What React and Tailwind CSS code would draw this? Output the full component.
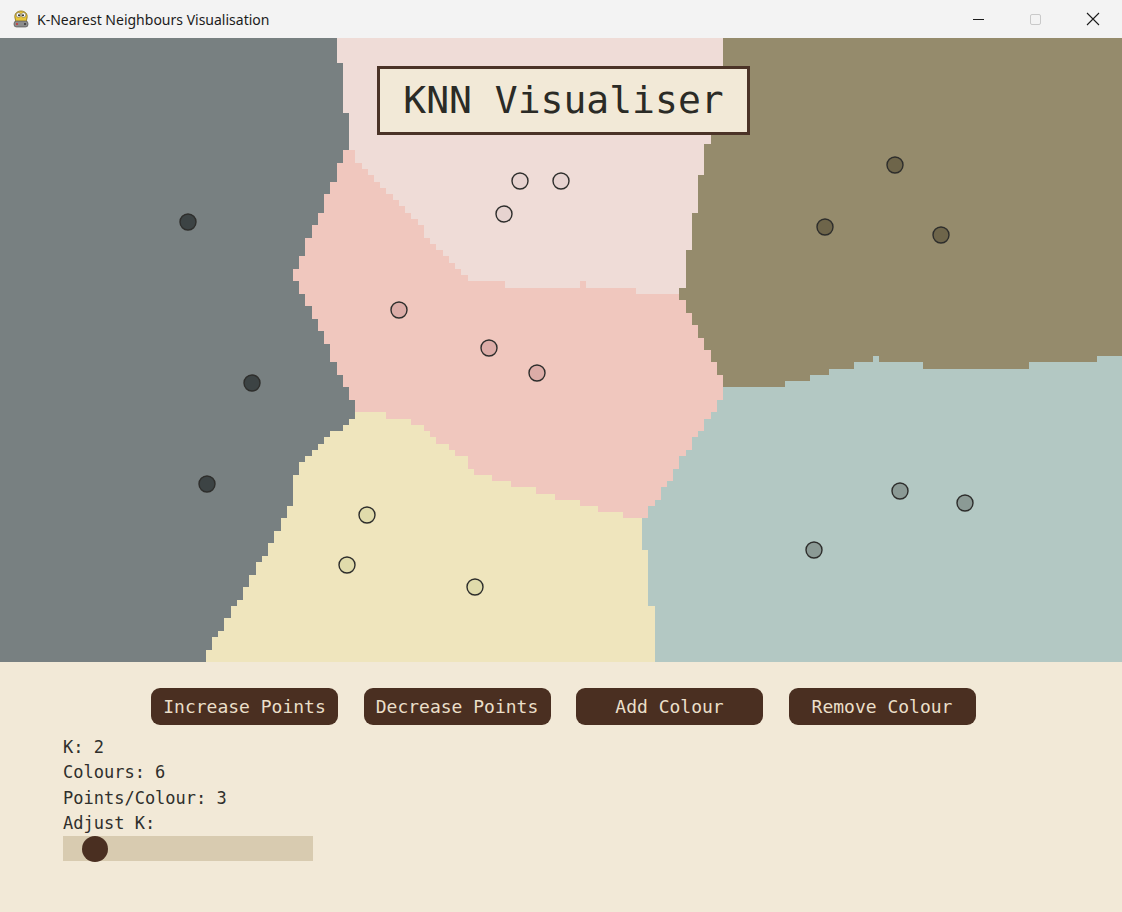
import React from "react";

const W = 1122;
const H = 624;
const COLS = 180;
const ROWS = 100;
const CW = W / COLS;
const CH = H / ROWS;

const CLASSES = [
  { fill: "#788081", pt: "#3c4344", pts: [[188, 184], [252, 345], [207, 446]] },
  { fill: "#efdcd7", pt: "#e7d3d0", pts: [[520, 143], [561, 143], [504, 176]] },
  { fill: "#f0c7be", pt: "#dcaca7", pts: [[399, 272], [489, 310], [537, 335]] },
  { fill: "#958b6c", pt: "#6e654a", pts: [[895, 127], [825, 189], [941, 197]] },
  { fill: "#efe5bd", pt: "#e0dbab", pts: [[367, 477], [347, 527], [475, 549]] },
  { fill: "#b3c8c3", pt: "#8b9a95", pts: [[900, 453], [965, 465], [814, 512]] },
];

function classify(x, y) {
  let best = 0;
  let bd = Infinity;
  CLASSES.forEach((c, ci) => {
    c.pts.forEach(([px, py]) => {
      const d = (px - x) * (px - x) + (py - y) * (py - y);
      if (d < bd) {
        bd = d;
        best = ci;
      }
    });
  });
  return best;
}

function buildRuns() {
  const runs = [];
  for (let j = 0; j < ROWS; j++) {
    const y = j * CH;
    let start = 0;
    let cur = classify(0, y);
    for (let i = 1; i <= COLS; i++) {
      const c = i < COLS ? classify(i * CW, y) : -1;
      if (c !== cur) {
        runs.push({ x: start * CW, y: j * CH, w: (i - start) * CW, c: cur });
        start = i;
        cur = c;
      }
    }
  }
  return runs;
}

const RUNS = buildRuns();

function PygameIcon() {
  return (
    <svg width="20" height="20" viewBox="0 0 20 20">
      <path d="M4 9 C3 5 6 2 10 2 C14 2 17 5 16 9 L15 13 C13 15 7 15 5 13 Z" fill="#e8c53a" stroke="#8a6d10" strokeWidth="0.8" />
      <circle cx="7.5" cy="6" r="2.3" fill="#fff" stroke="#555" strokeWidth="0.5" />
      <circle cx="12.5" cy="6" r="2.3" fill="#fff" stroke="#555" strokeWidth="0.5" />
      <circle cx="8" cy="6.3" r="1" fill="#222" />
      <circle cx="12" cy="6.3" r="1" fill="#222" />
      <rect x="3" y="12" width="14" height="6" rx="2.5" fill="#8c8c8c" stroke="#444" strokeWidth="0.6" />
      <circle cx="6" cy="15" r="1" fill="#c33" />
      <circle cx="14" cy="15" r="1" fill="#333" />
    </svg>
  );
}

function KnnCanvas() {
  return (
    <svg width={W} height={H} viewBox={`0 0 ${W} ${H}`} className="block">
      <g shapeRendering="crispEdges">
        {RUNS.map((r, k) => (
          <rect key={k} x={r.x} y={r.y} width={r.w + 0.6} height={CH + 0.6} fill={CLASSES[r.c].fill} />
        ))}
      </g>
      {CLASSES.map((c, ci) =>
        c.pts.map(([x, y], pi) => (
          <circle key={`${ci}-${pi}`} cx={x} cy={y} r="8" fill={c.pt} stroke="#2e2e2c" strokeWidth="1.4" />
        ))
      )}
    </svg>
  );
}

const mono = { fontFamily: '"DejaVu Sans Mono", "Liberation Mono", monospace' };

function Btn({ children }) {
  return (
    <div
      className="w-[187px] h-[37px] rounded-[9px] bg-[#4a2f21] text-[#eadfc9] text-[18px] flex items-center justify-center"
      style={mono}
    >
      {children}
    </div>
  );
}

export default function App() {
  return (
    <div className="w-[1122px] h-[912px] bg-[#f2e9d7] overflow-hidden flex flex-col">
      <div className="h-[38px] bg-[#f3f3f3] flex items-center shrink-0">
        <div className="ml-[11px] mr-[6px] flex items-center">
          <PygameIcon />
        </div>
        <div className="text-[14px] text-[#1b1b1b]" style={{ fontFamily: '"Noto Sans", "Open Sans", sans-serif' }}>
          K-Nearest Neighbours Visualisation
        </div>
        <div className="ml-auto flex h-full">
          <div className="w-[58px] h-full flex items-center justify-center pl-[2px]">
            <div className="w-[11px] h-px bg-[#1b1b1b]" />
          </div>
          <div className="w-[58px] h-full flex items-center justify-center">
            <div className="w-[11px] h-[11px] border border-[#c9c9c9] rounded-[2px]" />
          </div>
          <div className="w-[58px] h-full flex items-center justify-center">
            <svg width="14" height="14" viewBox="0 0 14 14">
              <path d="M1 1 L13 13 M13 1 L1 13" stroke="#1b1b1b" strokeWidth="1.1" />
            </svg>
          </div>
        </div>
      </div>

      <div className="relative w-[1122px] h-[624px] shrink-0">
        <KnnCanvas />
        <div
          className="absolute left-[377px] top-[28px] w-[373px] h-[69px] border-[3px] border-[#4b3327] bg-[#f2e9d7] flex items-center justify-center text-[38px] text-[#2b2b26]"
          style={mono}
        >
          KNN Visualiser
        </div>
      </div>

      <div className="flex-1 flex flex-col">
        <div className="flex gap-[25.5px] pl-[151px] pt-[26px]">
          <Btn>Increase Points</Btn>
          <Btn>Decrease Points</Btn>
          <Btn>Add Colour</Btn>
          <Btn>Remove Colour</Btn>
        </div>
        <div className="pl-[63px] pt-[10px] text-[17px] leading-[25.3px] text-[#2f2f2c]" style={mono}>
          <div>K: 2</div>
          <div>Colours: 6</div>
          <div>Points/Colour: 3</div>
          <div>Adjust K:</div>
        </div>
        <div className="ml-[63px] mt-[0px] w-[250px] h-[25px] bg-[#d8cbb0] relative">
          <div className="absolute left-[19px] top-[0px] w-[26px] h-[26px] rounded-full bg-[#4a2f21]" />
        </div>
      </div>
    </div>
  );
}
